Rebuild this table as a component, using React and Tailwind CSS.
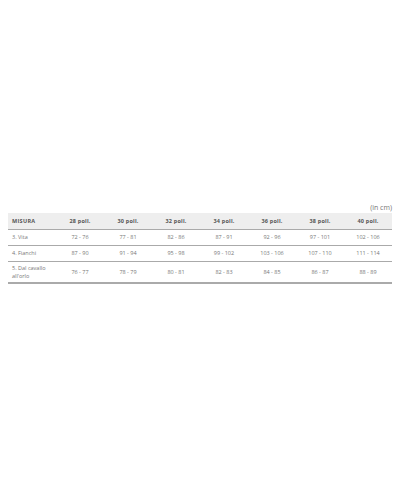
export default function App() {
  const cols = ["28 poll.", "30 poll.", "32 poll.", "34 poll.", "36 poll.", "38 poll.", "40 poll."];
  const rows = [
    { label: "3. Vita", vals: ["72 - 76", "77 - 81", "82 - 86", "87 - 91", "92 - 96", "97 - 101", "102 - 106"] },
    { label: "4. Fianchi", vals: ["87 - 90", "91 - 94", "95 - 98", "99 - 102", "103 - 106", "107 - 110", "111 - 114"] },
    { label: "5. Dal cavallo all'orlo", vals: ["76 - 77", "78 - 79", "80 - 81", "82 - 83", "84 - 85", "86 - 87", "88 - 89"] },
  ];

  return (
    <div className="w-[400px] h-[500px] bg-white font-['Open_Sans',sans-serif]">
      <div className="pt-[203px] px-2">
        <p className="text-right text-[7px] leading-[10px] text-[#777]">(in cm)</p>
        <table className="w-full table-fixed border-collapse text-[5.5px] text-[#777]">
          <thead>
            <tr className="bg-[#eeeeee] h-[16px] border-b border-[#aaa]">
              <th className="text-left pl-1 font-bold text-[#555] tracking-[0.3px]">MISURA</th>
              {cols.map((c) => (
                <th key={c} className="font-bold text-[#555] text-center tracking-[0.2px]">{c}</th>
              ))}
            </tr>
          </thead>
          <tbody>
            {rows.map((r, i) => (
              <tr
                key={r.label}
                className={
                  i === rows.length - 1
                    ? "h-[22px] border-b-2 border-[#aaa]"
                    : "h-[16px] border-b border-[#aaa]"
                }
              >
                <td className="pl-1 pr-1 text-left leading-[8px]">{r.label}</td>
                {r.vals.map((v) => (
                  <td key={v} className="text-center">{v}</td>
                ))}
              </tr>
            ))}
          </tbody>
        </table>
      </div>
    </div>
  );
}
